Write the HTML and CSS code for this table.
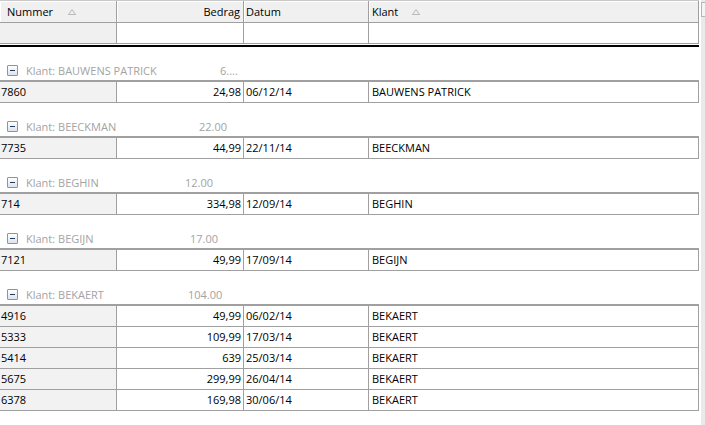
FILE: index.html
```html
<!DOCTYPE html>
<html>
<head>
<meta charset="utf-8">
<link rel="stylesheet" href="styles.css">
</head>
<body>
<div class="page">
  <div class="grid">
    <div class="row head">
      <div class="hc left">Nummer<svg class="sort" width="8" height="6" viewBox="0 0 8 6"><path d="M0.5 5.5 L4 0.5 L7.5 5.5 Z" fill="none" stroke="#b8b8b8" stroke-width="1"/></svg></div>
      <div class="hc right">Bedrag</div>
      <div class="hc left dat">Datum</div>
      <div class="hc left klant">Klant<svg class="sort" width="8" height="6" viewBox="0 0 8 6"><path d="M0.5 5.5 L4 0.5 L7.5 5.5 Z" fill="none" stroke="#b8b8b8" stroke-width="1"/></svg></div>
    </div>
    <div class="row filter">
      <div class="fc num"></div>
      <div class="fc"></div>
      <div class="fc"></div>
      <div class="fc"></div>
    </div>
    <div class="groups">

      <div class="group">
        <div class="ghead">
          <div class="lead" style="width:220px"><span class="minus"></span><span class="glabel">Klant: BAUWENS PATRICK</span></div>
          <span class="gsum">6....</span>
        </div>
        <div class="rows">
          <div class="row data"><div class="c num">7860</div><div class="c amt">24,98</div><div class="c">06/12/14</div><div class="c kl">BAUWENS PATRICK</div></div>
        </div>
      </div>

      <div class="group">
        <div class="ghead">
          <div class="lead" style="width:199px"><span class="minus"></span><span class="glabel">Klant: BEECKMAN</span></div>
          <span class="gsum">22.00</span>
        </div>
        <div class="rows">
          <div class="row data"><div class="c num">7735</div><div class="c amt">44,99</div><div class="c">22/11/14</div><div class="c kl">BEECKMAN</div></div>
        </div>
      </div>

      <div class="group">
        <div class="ghead">
          <div class="lead" style="width:185px"><span class="minus"></span><span class="glabel">Klant: BEGHIN</span></div>
          <span class="gsum">12.00</span>
        </div>
        <div class="rows">
          <div class="row data"><div class="c num">714</div><div class="c amt">334,98</div><div class="c">12/09/14</div><div class="c kl">BEGHIN</div></div>
        </div>
      </div>

      <div class="group">
        <div class="ghead">
          <div class="lead" style="width:190px"><span class="minus"></span><span class="glabel">Klant: BEGIJN</span></div>
          <span class="gsum">17.00</span>
        </div>
        <div class="rows">
          <div class="row data"><div class="c num">7121</div><div class="c amt">49,99</div><div class="c">17/09/14</div><div class="c kl">BEGIJN</div></div>
        </div>
      </div>

      <div class="group">
        <div class="ghead">
          <div class="lead" style="width:188px"><span class="minus"></span><span class="glabel">Klant: BEKAERT</span></div>
          <span class="gsum">104.00</span>
        </div>
        <div class="rows">
          <div class="row data"><div class="c num">4916</div><div class="c amt">49,99</div><div class="c">06/02/14</div><div class="c kl">BEKAERT</div></div>
          <div class="row data"><div class="c num">5333</div><div class="c amt">109,99</div><div class="c">17/03/14</div><div class="c kl">BEKAERT</div></div>
          <div class="row data"><div class="c num">5414</div><div class="c amt">639</div><div class="c">25/03/14</div><div class="c kl">BEKAERT</div></div>
          <div class="row data"><div class="c num">5675</div><div class="c amt">299,99</div><div class="c">26/04/14</div><div class="c kl">BEKAERT</div></div>
          <div class="row data"><div class="c num">6378</div><div class="c amt">169,98</div><div class="c">30/06/14</div><div class="c kl">BEKAERT</div></div>
        </div>
      </div>

    </div>
  </div>
  <div class="scroll"><div class="sbtn"></div></div>
</div>
</body>
</html>
```
FILE: styles.css
```css
html, body {
  margin: 0;
  padding: 0;
  background: #ffffff;
}
body {
  font-family: "Open Sans", "Liberation Sans", sans-serif;
  font-size: 11px;
  color: #000;
  width: 705px;
  height: 425px;
  overflow: hidden;
}
.page {
  display: flex;
  gap: 2px;
  height: 425px;
}
.grid {
  width: 699px;
  flex: none;
}
.row {
  display: grid;
  grid-template-columns: 117px 127px 125px 330px;
}
.head {
  border-top: 1px solid #c9c9c9;
  border-bottom: 1px solid #a0a0a0;
}
.hc {
  height: 21px;
  line-height: 22px;
  background: #f0f0f0;
  border-right: 1px solid #a0a0a0;
  box-shadow: inset 1px 1px 0 #ffffff;
  display: flex;
  align-items: center;
  white-space: nowrap;
  overflow: hidden;
}
.hc.left { padding-left: 7px; }
.hc.right { justify-content: flex-end; padding-right: 3px; }
.hc.dat { padding-left: 2px; }
.hc.klant { padding-left: 3px; }
.sort {
  margin-left: 15px;
  margin-top: 1px;
}
.hc.klant .sort { margin-left: 14px; }
.filter {
  border-bottom: 1px solid #a0a0a0;
}
.fc {
  height: 20px;
  background: #fff;
  border-right: 1px solid #a0a0a0;
}
.fc.num { background: #f0f0f0; }
.groups {
  margin-top: 1px;
  border-top: 2px solid #000;
}
.ghead {
  height: 33px;
  box-sizing: border-box;
  padding-top: 13px;
  display: flex;
  align-items: center;
  color: #a3a3a3;
  white-space: nowrap;
}
.lead {
  display: flex;
  align-items: center;
  flex: none;
  box-sizing: border-box;
  padding-left: 7px;
}
.minus {
  width: 9px;
  height: 9px;
  border: 1px solid #8496ad;
  border-radius: 1px;
  background: linear-gradient(#ffffff, #dde3ea);
  position: relative;
  flex: none;
  margin-right: 8px;
}
.minus::after {
  content: "";
  position: absolute;
  left: 2px;
  top: 4px;
  width: 5px;
  height: 1px;
  background: #1e3a5f;
}
.rows {
  border-top: 2px solid #a0a0a0;
}
.data {
  border-bottom: 1px solid #a0a0a0;
}
.c {
  height: 20px;
  line-height: 20px;
  border-right: 1px solid #a0a0a0;
  padding-left: 2px;
  white-space: nowrap;
  overflow: hidden;
}
.c.num {
  background: #f2f2f2;
  padding-left: 1px;
}
.c.amt {
  text-align: right;
  padding-right: 2px;
  padding-left: 0;
}
.c.kl { padding-left: 3px; }
.scroll {
  width: 4px;
  height: 425px;
  background: #eaeaea;
  flex: none;
  padding-top: 2px;
  box-sizing: border-box;
}
.sbtn {
  height: 13px;
  border: 1px solid #b5b5b5;
  border-right: none;
  background: #f4f4f4;
}
```
